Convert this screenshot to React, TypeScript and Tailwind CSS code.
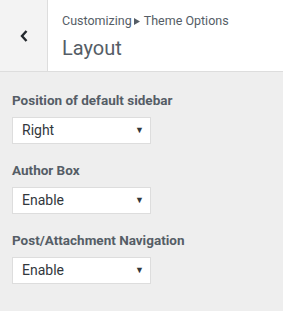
import React from "react";

const sections = [
  { label: "Position of default sidebar", value: "Right" },
  { label: "Author Box", value: "Enable" },
  { label: "Post/Attachment Navigation", value: "Enable" },
];

export default function App() {
  return (
    <div className="h-[311px] w-[283px] bg-[#eeeeee] font-['Roboto',sans-serif]">
      <header className="flex h-[72px] border-b border-[#dddddd] bg-white">
        <button className="flex w-[48px] items-center justify-center border-r border-[#dddddd] bg-[#f3f3f3] text-[#23282d]">
          <svg width="10" height="14" viewBox="0 0 10 14" fill="none">
            <path d="M7.5 2 L3 7 L7.5 12" stroke="currentColor" strokeWidth="2.4" />
          </svg>
        </button>
        <div className="flex flex-col pl-[14px] pt-[12px]">
          <span className="flex items-center text-[12.5px] leading-[18px] text-[#555d66]">
            Customizing
            <svg width="6" height="7" viewBox="0 0 6 7" className="ml-[2px] mr-[4px]">
              <path d="M0 0 L6 3.5 L0 7 Z" fill="#555d66" />
            </svg>
            Theme Options
          </span>
          <h1 className="mt-[6px] text-[20px] leading-[24px] text-[#555d66]">Layout</h1>
        </div>
      </header>
      <main className="flex flex-col gap-[17px] px-[12px] pt-[19px]">
        {sections.map((s) => (
          <div key={s.label} className="flex flex-col">
            <label className="text-[13.5px] font-bold leading-[18px] text-[#555d66]">{s.label}</label>
            <div className="mt-[8px] flex h-[27px] w-[139px] items-center justify-between border border-[#dddddd] bg-white pl-[9px] pr-[6px]">
              <span className="text-[14px] text-[#32373c]">{s.value}</span>
              <span className="text-[9px] text-[#32373c]">▼</span>
            </div>
          </div>
        ))}
      </main>
    </div>
  );
}
